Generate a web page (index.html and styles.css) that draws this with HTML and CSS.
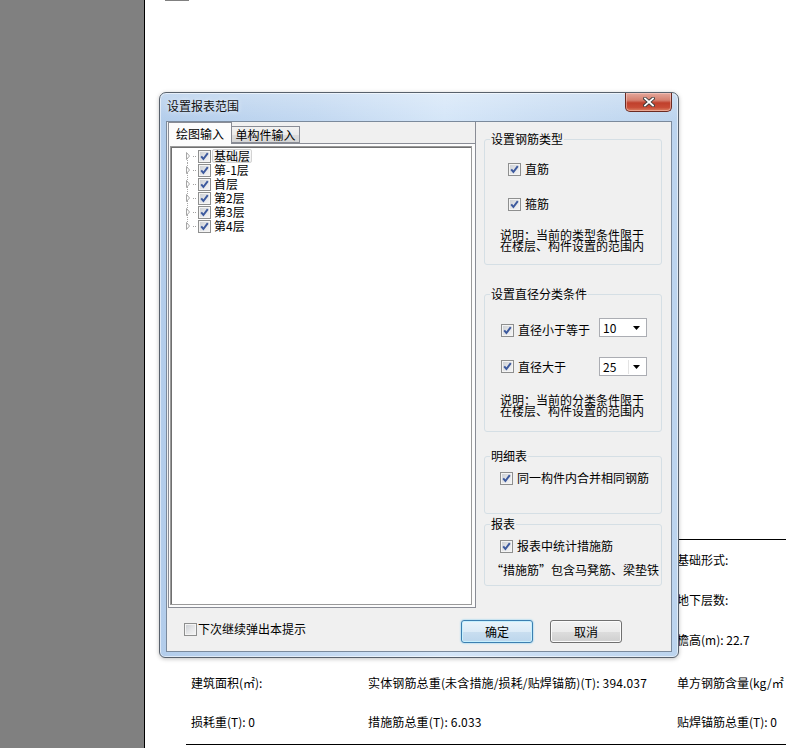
FILE: index.html
```html
<!DOCTYPE html>
<html lang="zh-CN">
<head>
<meta charset="utf-8">
<title>设置报表范围</title>
<link rel="stylesheet" href="styles.css">
</head>
<body>
<div class="screen">
  <aside class="sidebar"></aside>
  <main class="doc">
    <div class="topmark"></div>
    <section class="project">
      <div class="project-row">基础形式:</div>
      <div class="project-row">地下层数:</div>
      <div class="project-row">檐高(m): 22.7</div>
    </section>
    <section class="stats">
      <div class="stats-row">
        <span class="col1">建筑面积(㎡):</span>
        <span class="col2">实体钢筋总重(未含措施/损耗/贴焊锚筋)(T): 394.037</span>
        <span class="col3">单方钢筋含量(kg/㎡</span>
      </div>
      <div class="stats-row stats-row2">
        <span class="col1">损耗重(T): 0</span>
        <span class="col2">措施筋总重(T): 6.033</span>
        <span class="col3">贴焊锚筋总重(T): 0</span>
      </div>
    </section>
  </main>

  <div class="dialog">
    <div class="titlebar">
      <span class="title">设置报表范围</span>
      <span class="close">
        <svg width="12" height="10" viewBox="0 0 12 10"><path d="M2 1.5 L10 8.5 M10 1.5 L2 8.5" stroke="#3a3a3a" stroke-width="3.6" stroke-linecap="square"/><path d="M2 1.5 L10 8.5 M10 1.5 L2 8.5" stroke="#ffffff" stroke-width="1.8" stroke-linecap="square"/></svg>
      </span>
    </div>
    <div class="client">
      <div class="client-main">
        <div class="left-pane">
          <div class="tabs">
            <span class="tab tab-active">绘图输入</span>
            <span class="tab">单构件输入</span>
          </div>
          <div class="tab-page">
            <div class="tree">
              <div class="tree-row">
                <svg class="twisty" width="13" height="14" viewBox="0 0 13 14"><line x1="2.5" y1="7" x2="2.5" y2="14" stroke="#a8a8a8" stroke-dasharray="1 1"/><polygon points="1.5,3.5 4.5,7 1.5,10.5" fill="#fff" stroke="#a6a6a6"/><rect x="8" y="7" width="1" height="1" fill="#a0a0a0"/><rect x="10" y="7" width="1" height="1" fill="#a0a0a0"/></svg>
                <span class="cb checked"><svg width="11" height="11" viewBox="0 0 11 11"><path d="M2.2 5.4 L4.4 8 L8.8 2.2" fill="none" stroke="#3d5a9e" stroke-width="2"/></svg></span>
                <span class="node node-selected">基础层</span>
              </div>
              <div class="tree-row">
                <svg class="twisty" width="13" height="14" viewBox="0 0 13 14"><line x1="2.5" y1="0" x2="2.5" y2="14" stroke="#a8a8a8" stroke-dasharray="1 1"/><polygon points="1.5,3.5 4.5,7 1.5,10.5" fill="#fff" stroke="#a6a6a6"/><rect x="8" y="7" width="1" height="1" fill="#a0a0a0"/><rect x="10" y="7" width="1" height="1" fill="#a0a0a0"/></svg>
                <span class="cb checked"><svg width="11" height="11" viewBox="0 0 11 11"><path d="M2.2 5.4 L4.4 8 L8.8 2.2" fill="none" stroke="#3d5a9e" stroke-width="2"/></svg></span>
                <span class="node">第-1层</span>
              </div>
              <div class="tree-row">
                <svg class="twisty" width="13" height="14" viewBox="0 0 13 14"><line x1="2.5" y1="0" x2="2.5" y2="14" stroke="#a8a8a8" stroke-dasharray="1 1"/><polygon points="1.5,3.5 4.5,7 1.5,10.5" fill="#fff" stroke="#a6a6a6"/><rect x="8" y="7" width="1" height="1" fill="#a0a0a0"/><rect x="10" y="7" width="1" height="1" fill="#a0a0a0"/></svg>
                <span class="cb checked"><svg width="11" height="11" viewBox="0 0 11 11"><path d="M2.2 5.4 L4.4 8 L8.8 2.2" fill="none" stroke="#3d5a9e" stroke-width="2"/></svg></span>
                <span class="node">首层</span>
              </div>
              <div class="tree-row">
                <svg class="twisty" width="13" height="14" viewBox="0 0 13 14"><line x1="2.5" y1="0" x2="2.5" y2="14" stroke="#a8a8a8" stroke-dasharray="1 1"/><polygon points="1.5,3.5 4.5,7 1.5,10.5" fill="#fff" stroke="#a6a6a6"/><rect x="8" y="7" width="1" height="1" fill="#a0a0a0"/><rect x="10" y="7" width="1" height="1" fill="#a0a0a0"/></svg>
                <span class="cb checked"><svg width="11" height="11" viewBox="0 0 11 11"><path d="M2.2 5.4 L4.4 8 L8.8 2.2" fill="none" stroke="#3d5a9e" stroke-width="2"/></svg></span>
                <span class="node">第2层</span>
              </div>
              <div class="tree-row">
                <svg class="twisty" width="13" height="14" viewBox="0 0 13 14"><line x1="2.5" y1="0" x2="2.5" y2="14" stroke="#a8a8a8" stroke-dasharray="1 1"/><polygon points="1.5,3.5 4.5,7 1.5,10.5" fill="#fff" stroke="#a6a6a6"/><rect x="8" y="7" width="1" height="1" fill="#a0a0a0"/><rect x="10" y="7" width="1" height="1" fill="#a0a0a0"/></svg>
                <span class="cb checked"><svg width="11" height="11" viewBox="0 0 11 11"><path d="M2.2 5.4 L4.4 8 L8.8 2.2" fill="none" stroke="#3d5a9e" stroke-width="2"/></svg></span>
                <span class="node">第3层</span>
              </div>
              <div class="tree-row">
                <svg class="twisty" width="13" height="14" viewBox="0 0 13 14"><line x1="2.5" y1="0" x2="2.5" y2="7" stroke="#a8a8a8" stroke-dasharray="1 1"/><polygon points="1.5,3.5 4.5,7 1.5,10.5" fill="#fff" stroke="#a6a6a6"/><rect x="8" y="7" width="1" height="1" fill="#a0a0a0"/><rect x="10" y="7" width="1" height="1" fill="#a0a0a0"/></svg>
                <span class="cb checked"><svg width="11" height="11" viewBox="0 0 11 11"><path d="M2.2 5.4 L4.4 8 L8.8 2.2" fill="none" stroke="#3d5a9e" stroke-width="2"/></svg></span>
                <span class="node">第4层</span>
              </div>
            </div>
          </div>
        </div>

        <div class="right-pane">
          <fieldset class="group group-type">
            <legend>设置钢筋类型</legend>
            <div class="check-row row-first">
              <span class="cb checked"><svg width="11" height="11" viewBox="0 0 11 11"><path d="M2.2 5.4 L4.4 8 L8.8 2.2" fill="none" stroke="#3d5a9e" stroke-width="2"/></svg></span>
              <span>直筋</span>
            </div>
            <div class="check-row row-second">
              <span class="cb checked"><svg width="11" height="11" viewBox="0 0 11 11"><path d="M2.2 5.4 L4.4 8 L8.8 2.2" fill="none" stroke="#3d5a9e" stroke-width="2"/></svg></span>
              <span>箍筋</span>
            </div>
            <p class="note">说明：当前的类型条件限于<br>在楼层、构件设置的范围内</p>
          </fieldset>

          <fieldset class="group group-dia">
            <legend>设置直径分类条件</legend>
            <div class="dia-row dia-first">
              <span class="check-row">
                <span class="cb checked"><svg width="11" height="11" viewBox="0 0 11 11"><path d="M2.2 5.4 L4.4 8 L8.8 2.2" fill="none" stroke="#3d5a9e" stroke-width="2"/></svg></span>
                <span>直径小于等于</span>
              </span>
              <span class="combo"><span class="combo-value">10</span><svg class="combo-arrow" width="7" height="4" viewBox="0 0 7 4"><polygon points="0,0 7,0 3.5,4" fill="#000"/></svg></span>
            </div>
            <div class="dia-row dia-second">
              <span class="check-row">
                <span class="cb checked"><svg width="11" height="11" viewBox="0 0 11 11"><path d="M2.2 5.4 L4.4 8 L8.8 2.2" fill="none" stroke="#3d5a9e" stroke-width="2"/></svg></span>
                <span>直径大于</span>
              </span>
              <span class="combo combo-split"><span class="combo-value">25</span><svg class="combo-arrow" width="7" height="4" viewBox="0 0 7 4"><polygon points="0,0 7,0 3.5,4" fill="#000"/></svg></span>
            </div>
            <p class="note">说明：当前的分类条件限于<br>在楼层、构件设置的范围内</p>
          </fieldset>

          <fieldset class="group group-detail">
            <legend>明细表</legend>
            <div class="check-row">
              <span class="cb checked"><svg width="11" height="11" viewBox="0 0 11 11"><path d="M2.2 5.4 L4.4 8 L8.8 2.2" fill="none" stroke="#3d5a9e" stroke-width="2"/></svg></span>
              <span>同一构件内合并相同钢筋</span>
            </div>
          </fieldset>

          <fieldset class="group group-report">
            <legend>报表</legend>
            <div class="check-row">
              <span class="cb checked"><svg width="11" height="11" viewBox="0 0 11 11"><path d="M2.2 5.4 L4.4 8 L8.8 2.2" fill="none" stroke="#3d5a9e" stroke-width="2"/></svg></span>
              <span>报表中统计措施筋</span>
            </div>
            <p class="report-note">“措施筋”包含马凳筋、梁垫铁</p>
          </fieldset>
        </div>
      </div>

      <div class="client-footer">
        <span class="check-row footer-check">
          <span class="cb"></span>
          <span>下次继续弹出本提示</span>
        </span>
        <div class="buttons">
          <button class="btn btn-default" type="button">确定</button>
          <button class="btn" type="button">取消</button>
        </div>
      </div>
    </div>
  </div>
</div>
</body>
</html>
```

FILE: styles.css
```css
* {
  box-sizing: border-box;
}

html, body {
  margin: 0;
  padding: 0;
  background: #ffffff;
}

body {
  font-family: "Noto Sans CJK SC", "Noto Sans", sans-serif;
  font-size: 12px;
  line-height: 14px;
  color: #000;
}

.screen {
  position: relative;
  display: flex;
  width: 786px;
  height: 748px;
  overflow: hidden;
}

.sidebar {
  width: 145px;
  flex: none;
  background: #808080;
  border-right: 1px solid #000;
}

.doc {
  flex: 1;
  min-width: 0;
  overflow: hidden;
  background: #fff;
  white-space: nowrap;
}

.topmark {
  margin-left: 20px;
  width: 24px;
  height: 1px;
  background: #808080;
}

.project {
  margin-top: 538px;
  margin-left: 532px;
  border-top: 1px solid #000;
}

.project-row {
  height: 40px;
  line-height: 40px;
}

.stats {
  margin-top: 3px;
  margin-left: 41px;
  padding-left: 5px;
  padding-bottom: 3px;
  border-bottom: 1px solid #000;
}

.stats-row {
  display: flex;
  height: 40px;
  line-height: 40px;
}

.stats-row2 {
  height: 38px;
  line-height: 38px;
}

.col1 {
  width: 177px;
  flex: none;
}

.col2 {
  width: 309px;
  flex: none;
  letter-spacing: 0.15px;
}

.col3 {
  flex: none;
}

/* ---------- dialog window ---------- */

.dialog {
  position: absolute;
  left: 159px;
  top: 92px;
  width: 520px;
  height: 566px;
  display: flex;
  flex-direction: column;
  padding: 0 6px 5px 6px;
  border: 1px solid #58616c;
  border-radius: 7px 7px 6px 6px;
  background:
    linear-gradient(to bottom, rgba(255, 255, 255, 0.25), rgba(255, 255, 255, 0) 28px),
    linear-gradient(to right, #b3cdeb 0%, #c2d8f1 30%, #d5e6f8 55%, #c9ddf3 75%, #bcd4ee 100%);
  box-shadow: inset 0 0 0 1px rgba(255, 255, 255, 0.55), 0 1px 4px rgba(0, 0, 0, 0.25);
}

.titlebar {
  display: flex;
  align-items: flex-start;
  height: 28px;
  flex: none;
}

.title {
  padding-top: 6px;
  padding-left: 1px;
  color: #111;
  text-shadow: 0 0 5px rgba(255, 255, 255, 0.9);
}

.close {
  margin-left: auto;
  width: 47px;
  height: 19px;
  display: flex;
  align-items: center;
  justify-content: center;
  border: 1px solid #6b2a22;
  border-top: none;
  border-radius: 0 0 5px 5px;
  background: linear-gradient(to bottom, #e4a89c 0%, #d5806f 40%, #c0402c 55%, #c84c36 80%, #dc8466 100%);
  box-shadow: inset 0 0 0 1px rgba(255, 220, 210, 0.45);
}

.client {
  flex: 1;
  display: flex;
  flex-direction: column;
  border: 1px solid #7b8a9c;
  background: #f0f0f0;
}

.client-main {
  display: flex;
  height: 486px;
  flex: none;
}

.left-pane {
  width: 308px;
  margin-left: 1px;
  flex: none;
  display: flex;
  flex-direction: column;
  border-right: 1px solid #898c95;
}

.tabs {
  display: flex;
  align-items: flex-end;
  height: 21px;
  flex: none;
  position: relative;
  z-index: 1;
}

.tab {
  height: 17px;
  width: 68px;
  border: 1px solid #898c95;
  border-left: none;
  background: linear-gradient(to bottom, #f2f2f2 0%, #ebebeb 50%, #dddddd 51%, #d6d6d6 100%);
  text-align: center;
  line-height: 15px;
}

.tab-active {
  width: 64px;
  height: 22px;
  margin-bottom: -1px;
  border-left: 1px solid #898c95;
  border-bottom: none;
  background: #fcfcfc;
  line-height: 21px;
}

.tab-page {
  flex: 1;
  border: 1px solid #898c95;
  border-right: none;
  background: #fcfcfc;
  display: flex;
  flex-direction: column;
}

.tree {
  flex: 1;
  margin: 2px 3px 2px 1px;
  border: 1px solid #9a9a9a;
  box-shadow: inset 1px 1px 0 #6f6f6f;
  background: #fff;
  padding: 2px 0 0 14px;
}

.tree-row {
  display: flex;
  align-items: center;
  height: 14px;
}

.twisty {
  flex: none;
  display: block;
}

.node {
  margin-left: 1px;
  padding: 0 1px;
  height: 14px;
  line-height: 12px;
  border: 1px solid transparent;
  border-radius: 2px;
}

.node-selected {
  border-color: #d3d3d3;
  background: linear-gradient(to bottom, #fbfbfb, #eeeeee);
}

/* checkbox */
.cb {
  flex: none;
  width: 13px;
  height: 13px;
  border: 1px solid #8e8f8f;
  background: linear-gradient(135deg, #c8ccd1 0%, #e6e7e9 55%, #f6f6f6 100%);
  box-shadow: inset 0 0 0 1px #f4f4f4;
  display: flex;
  align-items: center;
  justify-content: center;
}

.cb svg {
  display: block;
}

.check-row {
  display: flex;
  align-items: center;
  gap: 4px;
  height: 14px;
}

/* right pane groups */
.right-pane {
  flex: 1;
  padding: 0 9px 0 8px;
  display: flex;
  flex-direction: column;
}

.group {
  margin: 0;
  padding: 0;
  min-width: 0;
  border: 1px solid #d5dfe5;
  border-radius: 3px;
}

.group legend {
  margin-left: 5px;
  padding: 0 1px;
  line-height: 14px;
}

.note {
  margin: 0;
  line-height: 11px;
}

.group-type {
  margin-top: 10px;
  padding-top: 16px;
  padding-bottom: 13px;
}

.group-type .check-row {
  margin-left: 23px;
}

.group-type .row-second {
  margin-top: 21px;
}

.group-type .note {
  margin-top: 18px;
  margin-left: 15px;
}

.group-dia {
  margin-top: 22px;
  padding-top: 17px;
  padding-bottom: 15px;
}

.dia-row {
  display: flex;
  align-items: center;
  height: 19px;
  margin: 0 14px 0 16px;
}

.dia-first {
  align-items: flex-end;
}

.dia-second {
  margin-top: 20px;
}

.combo {
  margin-left: auto;
  width: 48px;
  height: 19px;
  display: flex;
  align-items: center;
  border: 1px solid #abadb3;
  background: #fff;
  padding-left: 3px;
}

.combo-value {
  flex: 1;
  line-height: 14px;
}

.combo-arrow {
  display: block;
  margin-right: 6px;
}

.combo-split .combo-value {
  border-right: 1px solid #e3e3e3;
  margin-right: 4px;
}

.group-dia .note {
  margin-top: 18px;
  margin-left: 15px;
}

.group-detail {
  margin-top: 17px;
  padding-top: 8px;
  padding-bottom: 28px;
}

.group-detail .check-row,
.group-report .check-row {
  margin-left: 15px;
}

.group-report {
  margin-top: 3px;
  padding-top: 8px;
  padding-bottom: 8px;
}

.report-note {
  margin: 10px 0 0 6px;
  white-space: nowrap;
}

/* footer */
.client-footer {
  flex: 1;
  display: flex;
  align-items: flex-start;
  padding: 0 49px 0 17px;
}

.footer-check {
  margin-top: 14px;
  gap: 1px;
}

.buttons {
  margin-left: auto;
  margin-top: 12px;
  display: flex;
  gap: 17px;
}

.btn {
  width: 72px;
  height: 23px;
  padding: 0;
  font-family: "Noto Sans CJK SC", "Noto Sans", sans-serif;
  font-size: 12px;
  line-height: 14px;
  color: #000;
  border: 1px solid #707070;
  border-radius: 3px;
  background: linear-gradient(to bottom, #f2f2f2 0%, #ebebeb 50%, #dddddd 51%, #cfcfcf 100%);
  box-shadow: inset 0 0 0 1px #fcfcfc;
}

.btn-default {
  border-color: #3c7fb1;
  background: linear-gradient(to bottom, #eaf4fb 0%, #dcebf7 50%, #c9def0 51%, #bcd6ec 100%);
  box-shadow: inset 0 0 0 1px #c7f0fe, 0 0 2px #5fc0f0;
}
```
